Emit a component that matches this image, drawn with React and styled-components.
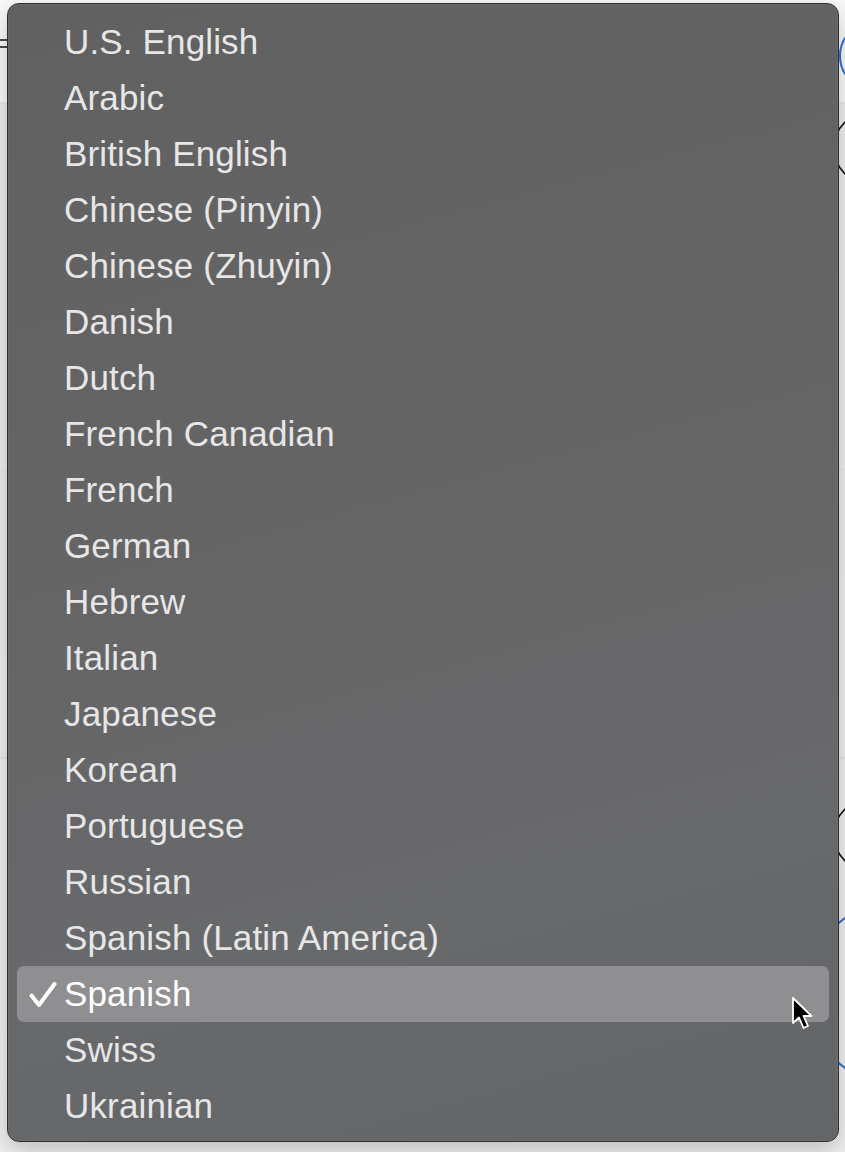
import React from "react";
import styled, { createGlobalStyle } from "styled-components";

const GlobalStyle = createGlobalStyle`
  html, body {
    margin: 0;
    padding: 0;
    background: #f1f1f1;
  }
`;

const languages = [
  "U.S. English",
  "Arabic",
  "British English",
  "Chinese (Pinyin)",
  "Chinese (Zhuyin)",
  "Danish",
  "Dutch",
  "French Canadian",
  "French",
  "German",
  "Hebrew",
  "Italian",
  "Japanese",
  "Korean",
  "Portuguese",
  "Russian",
  "Spanish (Latin America)",
  "Spanish",
  "Swiss",
  "Ukrainian",
];

const SELECTED = "Spanish";

const Page = styled.div`
  position: relative;
  width: 845px;
  height: 1152px;
  overflow: hidden;
  background: linear-gradient(#fafafa 0, #fafafa 103px, #eeeeee 104px, #f0f0f0 100%);
  font-family: "Liberation Sans", Arial, sans-serif;
`;

// bits of the window behind the popup
const Backdrop = styled.svg`
  position: absolute;
  inset: 0;
  width: 845px;
  height: 1152px;
`;

const Menu = styled.ul`
  position: absolute;
  top: 3px;
  left: 7px;
  width: 832px;
  height: 1139px;
  box-sizing: border-box;
  margin: 0;
  padding: 10px 9px 7px;
  list-style: none;
  border: 1px solid #2e2e2e;
  border-radius: 12px;
  background: linear-gradient(165deg, #616161 0%, #656566 45%, #68696b 75%, #646567 100%);
  box-shadow: inset 0 0 0 1px rgba(255, 255, 255, 0.06), 0 8px 24px rgba(0, 0, 0, 0.22);
`;

const Item = styled.li`
  position: relative;
  height: 56px;
  line-height: 56px;
  padding-left: 47px;
  border-radius: 7px;
  font-size: 35px;
  letter-spacing: 0.15px;
  white-space: nowrap;
  color: ${(p) => (p.$selected ? "#ffffff" : "#e6e6e7")};
  background: ${(p) => (p.$selected ? "#8f8f91" : "transparent")};
`;

const Check = styled.svg`
  position: absolute;
  left: 12px;
  top: 16px;
  width: 28px;
  height: 26px;
`;

const Cursor = styled.svg`
  position: absolute;
  left: 790px;
  top: 996px;
  width: 26px;
  height: 36px;
`;

function CheckMark() {
  return (
    <Check viewBox="0 0 28 26">
      <path
        d="M2.5 13.5 L10 23 L25.5 2"
        fill="none"
        stroke="#ffffff"
        strokeWidth="4"
        strokeLinecap="round"
        strokeLinejoin="round"
      />
    </Check>
  );
}

export default function App() {
  return (
    <>
      <GlobalStyle />
      <Page>
        <Backdrop viewBox="0 0 845 1152">
          <line x1="0" y1="40" x2="20" y2="40" stroke="#111" strokeWidth="1.5" />
          <line x1="0" y1="47" x2="20" y2="47" stroke="#111" strokeWidth="1.5" />
          <line x1="0" y1="103" x2="845" y2="103" stroke="#dcdcdc" strokeWidth="1" />
          <line x1="0" y1="470" x2="845" y2="470" stroke="#e6e6e6" strokeWidth="1" />
          <line x1="0" y1="758" x2="845" y2="758" stroke="#dcdcdc" strokeWidth="1" />
          <circle cx="874" cy="56" r="34" fill="none" stroke="#2f6fd0" strokeWidth="2" />
          <circle cx="870" cy="148" r="36" fill="none" stroke="#111" strokeWidth="1.6" />
          <circle cx="870" cy="835" r="36" fill="none" stroke="#111" strokeWidth="1.6" />
          <circle cx="900" cy="993" r="93" fill="none" stroke="#2f6fd0" strokeWidth="2" />
        </Backdrop>

        <Menu>
          {languages.map((name) => (
            <Item key={name} $selected={name === SELECTED}>
              {name === SELECTED && <CheckMark />}
              {name}
            </Item>
          ))}
        </Menu>

        <Cursor viewBox="0 0 26 36">
          <path
            d="M3 2 L3 27 L9 21.5 L13.5 32 L18 30 L13.5 20 L21.5 20 Z"
            fill="#000"
            stroke="#fff"
            strokeWidth="1.8"
            strokeLinejoin="round"
          />
        </Cursor>
      </Page>
    </>
  );
}
